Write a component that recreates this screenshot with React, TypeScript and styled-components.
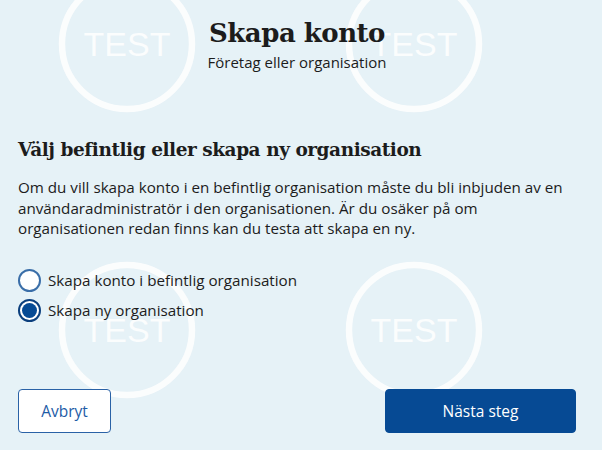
import { FC, useState } from 'react'
import styled, { createGlobalStyle } from 'styled-components'

const GlobalStyle = createGlobalStyle`
  html, body {
    margin: 0;
    padding: 0;
    background: #e6f2f7;
  }
  * {
    box-sizing: border-box;
  }
`

const Page = styled.div`
  position: relative;
  width: 602px;
  height: 450px;
  overflow: hidden;
  background: #e6f2f7;
  color: #1c1c1c;
  font-family: "Open Sans", "Noto Sans", sans-serif;
`

const Watermark = styled.svg`
  position: absolute;
  inset: 0;
  pointer-events: none;
`

const Content = styled.main`
  position: relative;
  width: 558px;
  margin-left: 18px;
  display: flex;
  flex-direction: column;
`

const Header = styled.header`
  display: flex;
  flex-direction: column;
  align-items: center;
  padding-top: 15px;
`

const Title = styled.h1`
  margin: 0;
  font-family: "DejaVu Serif", "Liberation Serif", serif;
  font-weight: 700;
  font-size: 26px;
  line-height: 36px;
  letter-spacing: -0.5px;
`

const Subtitle = styled.p`
  margin: 1px 0 0;
  font-size: 15px;
  line-height: 20px;
`

const Heading = styled.h2`
  margin: 65px 0 0;
  font-family: "DejaVu Serif", "Liberation Serif", serif;
  font-weight: 700;
  font-size: 18.5px;
  line-height: 26px;
  letter-spacing: -0.45px;
`

const Lead = styled.p`
  margin: 14px 0 0;
  font-size: 15.2px;
  line-height: 20.7px;
`

const Options = styled.div`
  display: flex;
  flex-direction: column;
  gap: 7px;
  margin-top: 30px;
`

const Option = styled.label`
  display: flex;
  align-items: center;
  gap: 7px;
  font-size: 15.2px;
  line-height: 23px;
  cursor: pointer;
`

const RadioDot = styled.span<{ $checked: boolean }>`
  width: 23px;
  height: 23px;
  flex: none;
  border-radius: 50%;
  background: #fff;
  border: 2px solid ${p => (p.$checked ? '#0b3f7d' : '#3a6ea8')};
  display: flex;
  align-items: center;
  justify-content: center;

  &::after {
    content: '';
    width: 15px;
    height: 15px;
    border-radius: 50%;
    background: #064a94;
    display: ${p => (p.$checked ? 'block' : 'none')};
  }
`

const HiddenInput = styled.input`
  position: absolute;
  opacity: 0;
  width: 0;
  height: 0;
`

const Footer = styled.footer`
  display: flex;
  justify-content: space-between;
  margin-top: 67px;
`

const Button = styled.button<{ $primary?: boolean }>`
  height: 44px;
  border-radius: 4px;
  font-family: "Open Sans", "Noto Sans", sans-serif;
  font-size: 15.5px;
  cursor: pointer;
  border: 1px solid ${p => (p.$primary ? '#064a94' : '#2a62a6')};
  background: ${p => (p.$primary ? '#064a94' : '#fff')};
  color: ${p => (p.$primary ? '#fff' : '#1d5ba6')};
  width: ${p => (p.$primary ? '191px' : '93px')};
`

const stamps = [
  { x: 127, y: 44 },
  { x: 414, y: 44 },
  { x: 127, y: 330 },
  { x: 414, y: 330 },
]

const options = [
  { id: 'existing', label: 'Skapa konto i befintlig organisation' },
  { id: 'new', label: 'Skapa ny organisation' },
]

const App: FC = () => {
  const [choice, setChoice] = useState('new')

  return (
    <>
      <GlobalStyle />
      <Page>
        <Watermark width="602" height="450" viewBox="0 0 602 450" aria-hidden="true">
          {stamps.map(s => (
            <g key={`${s.x}-${s.y}`} opacity="0.85">
              <circle cx={s.x} cy={s.y} r="65" fill="none" stroke="#fff" strokeWidth="6.5" />
              <text
                x={s.x}
                y={s.y + 12}
                textAnchor="middle"
                fill="#fff"
                fontFamily="Liberation Sans, Arial, sans-serif"
                fontSize="34"
              >
                TEST
              </text>
            </g>
          ))}
        </Watermark>
        <Content>
          <Header>
            <Title>Skapa konto</Title>
            <Subtitle>Företag eller organisation</Subtitle>
          </Header>
          <Heading>Välj befintlig eller skapa ny organisation</Heading>
          <Lead>
            Om du vill skapa konto i en befintlig organisation måste du bli inbjuden av en
            användaradministratör i den organisationen. Är du osäker på om organisationen
            redan finns kan du testa att skapa en ny.
          </Lead>
          <Options>
            {options.map(o => (
              <Option key={o.id}>
                <HiddenInput
                  type="radio"
                  name="org"
                  value={o.id}
                  checked={choice === o.id}
                  onChange={() => setChoice(o.id)}
                />
                <RadioDot $checked={choice === o.id} />
                {o.label}
              </Option>
            ))}
          </Options>
          <Footer>
            <Button>Avbryt</Button>
            <Button $primary>Nästa steg</Button>
          </Footer>
        </Content>
      </Page>
    </>
  )
}

export default App
